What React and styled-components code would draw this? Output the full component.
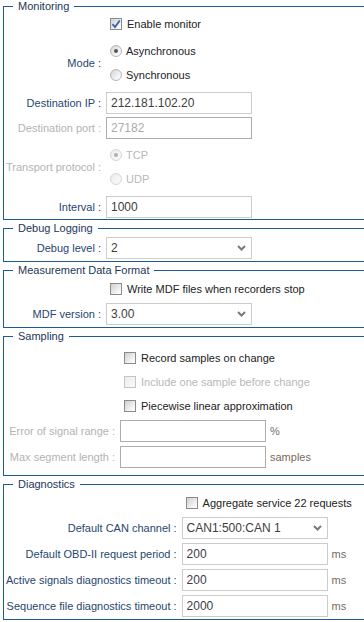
import styled, { createGlobalStyle } from "styled-components";

const Global = createGlobalStyle`
    html, body {
        margin: 0;
        padding: 0;
        overflow: hidden;
        background: #fff;
    }
    body {
        font-family: "Liberation Sans", Arial, sans-serif;
        font-size: 11px;
    }
`;

const Group = styled.fieldset`
    margin: 0 -80px 2px 3px;
    padding: ${(p) => p.$pt || 0}px 2px ${(p) => p.$pb || 0}px;
    border: 1px solid #1c5a99;
    min-width: 0;
`;

const Legend = styled.legend`
    margin-left: 7px;
    padding: 0 5px;
    font-size: 11px;
    line-height: 12px;
    color: #1d3657;
`;

// label column: fixed where groups line up with each other, else sized by the longest label
const Form = styled.div`
    display: grid;
    grid-template-columns: ${(p) => (p.$col ? `${p.$col}px` : "max-content")} 1fr;
    column-gap: 5px;
`;

const Label = styled.div`
    display: flex;
    align-items: center;
    justify-content: flex-end;
    white-space: nowrap;
    color: ${(p) => (p.$off ? "#b3b3b3" : "#27466e")};
`;

const Control = styled.div`
    grid-column: 2;
    display: flex;
    align-items: center;
    height: ${(p) => p.$h}px;
`;

const Choices = styled.div`
    grid-column: 2;
    display: flex;
    flex-direction: column;
    justify-content: center;
    height: ${(p) => p.$h}px;
`;

const TextInput = styled.input`
    box-sizing: border-box;
    width: 146px;
    height: 22px;
    margin: 0;
    padding: 0 4px;
    border: 1px solid ${(p) => (p.disabled ? "#adadad" : "#cccccc")};
    background: #fff;
    font-family: "Liberation Sans", Arial, sans-serif;
    font-size: 12px;
    color: ${(p) => (p.disabled ? "#ababab" : "#3d3d3d")};
    outline: none;
`;

const SelectBox = styled.div`
    box-sizing: border-box;
    width: 146px;
    height: 22px;
    padding: 0 5px 0 4px;
    border: 1px solid #cccccc;
    display: flex;
    align-items: center;
    justify-content: space-between;
    font-size: 12px;
    color: #3d3d3d;
`;

const Unit = styled.span`
    margin-left: 4px;
    color: #7b6a62;
`;

const Check = styled.label`
    display: flex;
    align-items: center;
    height: ${(p) => p.$h || 24}px;
    margin-left: 4px;
    color: ${(p) => (p.$off ? "#b8b8b8" : "#222")};
    white-space: nowrap;
`;

const Box = styled.span`
    box-sizing: border-box;
    width: 12px;
    height: 12px;
    margin-right: 5px;
    border: 1px solid ${(p) => (p.$off ? "#c4c4c4" : "#8a8a8a")};
    background: ${(p) =>
        p.$off
            ? "linear-gradient(135deg, #ececec, #fafafa)"
            : "linear-gradient(135deg, #cfcfcf, #f4f4f4 70%, #ffffff)"};
    display: flex;
    align-items: center;
    justify-content: center;
`;

const Radio = styled.span`
    position: relative;
    box-sizing: border-box;
    width: 12px;
    height: 12px;
    margin-right: 4px;
    border-radius: 50%;
    border: 1px solid ${(p) => (p.$off ? "#d6d6d6" : "#b4b4b4")};
    background: ${(p) =>
        p.$off
            ? "linear-gradient(135deg, #ececec, #fbfbfb)"
            : "linear-gradient(135deg, #d4d4d4, #f6f6f6 70%, #ffffff)"};

    &::after {
        content: "";
        display: ${(p) => (p.$on ? "block" : "none")};
        position: absolute;
        left: 3px;
        top: 3px;
        width: 4px;
        height: 4px;
        border-radius: 50%;
        background: ${(p) => (p.$off ? "#b0b0b0" : "#555")};
    }
`;

function Tick() {
    return (
        <svg width="10" height="10" viewBox="0 0 10 10">
            <path d="M1.5 5.2 L4 8 L8.8 1.5" fill="none" stroke="#3563a6" strokeWidth="1.8" />
        </svg>
    );
}

function Chevron() {
    return (
        <svg width="9" height="6" viewBox="0 0 9 6">
            <path d="M1 1 L4.5 4.5 L8 1" fill="none" stroke="#7a7a7a" strokeWidth="2" />
        </svg>
    );
}

function CheckBox({ text, checked, off, h }) {
    return (
        <Check $off={off} $h={h}>
            <Box $off={off}>{checked && <Tick />}</Box>
            {text}
        </Check>
    );
}

function RadioItem({ text, on, off }) {
    return (
        <Check $off={off}>
            <Radio $on={on} $off={off} />
            {text}
        </Check>
    );
}

function Field({ label, value, unit, off, h = 25 }) {
    return (
        <>
            <Label $off={off}>{label}</Label>
            <Control $h={h}>
                <TextInput value={value} disabled={off} readOnly />
                {unit && <Unit>{unit}</Unit>}
            </Control>
        </>
    );
}

function Pick({ label, value, h = 25 }) {
    return (
        <>
            <Label>{label}</Label>
            <Control $h={h}>
                <SelectBox>
                    {value}
                    <Chevron />
                </SelectBox>
            </Control>
        </>
    );
}

export default function App() {
    return (
        <>
            <Global />
            <Group>
                <Legend>Monitoring</Legend>
                <Form $col={95}>
                    <Control $h={24}>
                        <CheckBox text="Enable monitor" checked />
                    </Control>
                    <Label>Mode :</Label>
                    <Choices $h={54}>
                        <RadioItem text="Asynchronous" on />
                        <RadioItem text="Synchronous" />
                    </Choices>
                    <Field label="Destination IP :" value="212.181.102.20" />
                    <Field label="Destination port :" value="27182" off />
                    <Label $off>Transport protocol :</Label>
                    <Choices $h={54}>
                        <RadioItem text="TCP" on off />
                        <RadioItem text="UDP" off />
                    </Choices>
                    <Field label="Interval :" value="1000" />
                </Form>
            </Group>

            <Group $pt={1} $pb={1}>
                <Legend>Debug Logging</Legend>
                <Form $col={95}>
                    <Pick label="Debug level :" value="2" />
                </Form>
            </Group>

            <Group $pb={1}>
                <Legend>Measurement Data Format</Legend>
                <Form $col={95}>
                    <Control $h={25}>
                        <CheckBox text="Write MDF files when recorders stop" />
                    </Control>
                    <Pick label="MDF version :" value="3.00" />
                </Form>
            </Group>

            <Group $pt={3} $pb={5}>
                <Legend>Sampling</Legend>
                <Form $col={109}>
                    <Control $h={25}>
                        <CheckBox text="Record samples on change" />
                    </Control>
                    <Control $h={24}>
                        <CheckBox text="Include one sample before change" off />
                    </Control>
                    <Control $h={24}>
                        <CheckBox text="Piecewise linear approximation" />
                    </Control>
                    <Field label="Error of signal range :" value="" unit="%" off h={26} />
                    <Field label="Max segment length :" value="" unit="samples" off h={26} />
                </Form>
            </Group>

            <Group>
                <Legend>Diagnostics</Legend>
                <Form>
                    <Control $h={25}>
                        <CheckBox text="Aggregate service 22 requests" />
                    </Control>
                    <Pick label="Default CAN channel :" value="CAN1:500:CAN 1" h={26} />
                    <Field label="Default OBD-II request period :" value="200" unit="ms" h={26} />
                    <Field label="Active signals diagnostics timeout :" value="200" unit="ms" h={26} />
                    <Field label="Sequence file diagnostics timeout :" value="2000" unit="ms" h={26} />
                </Form>
            </Group>
        </>
    );
}
